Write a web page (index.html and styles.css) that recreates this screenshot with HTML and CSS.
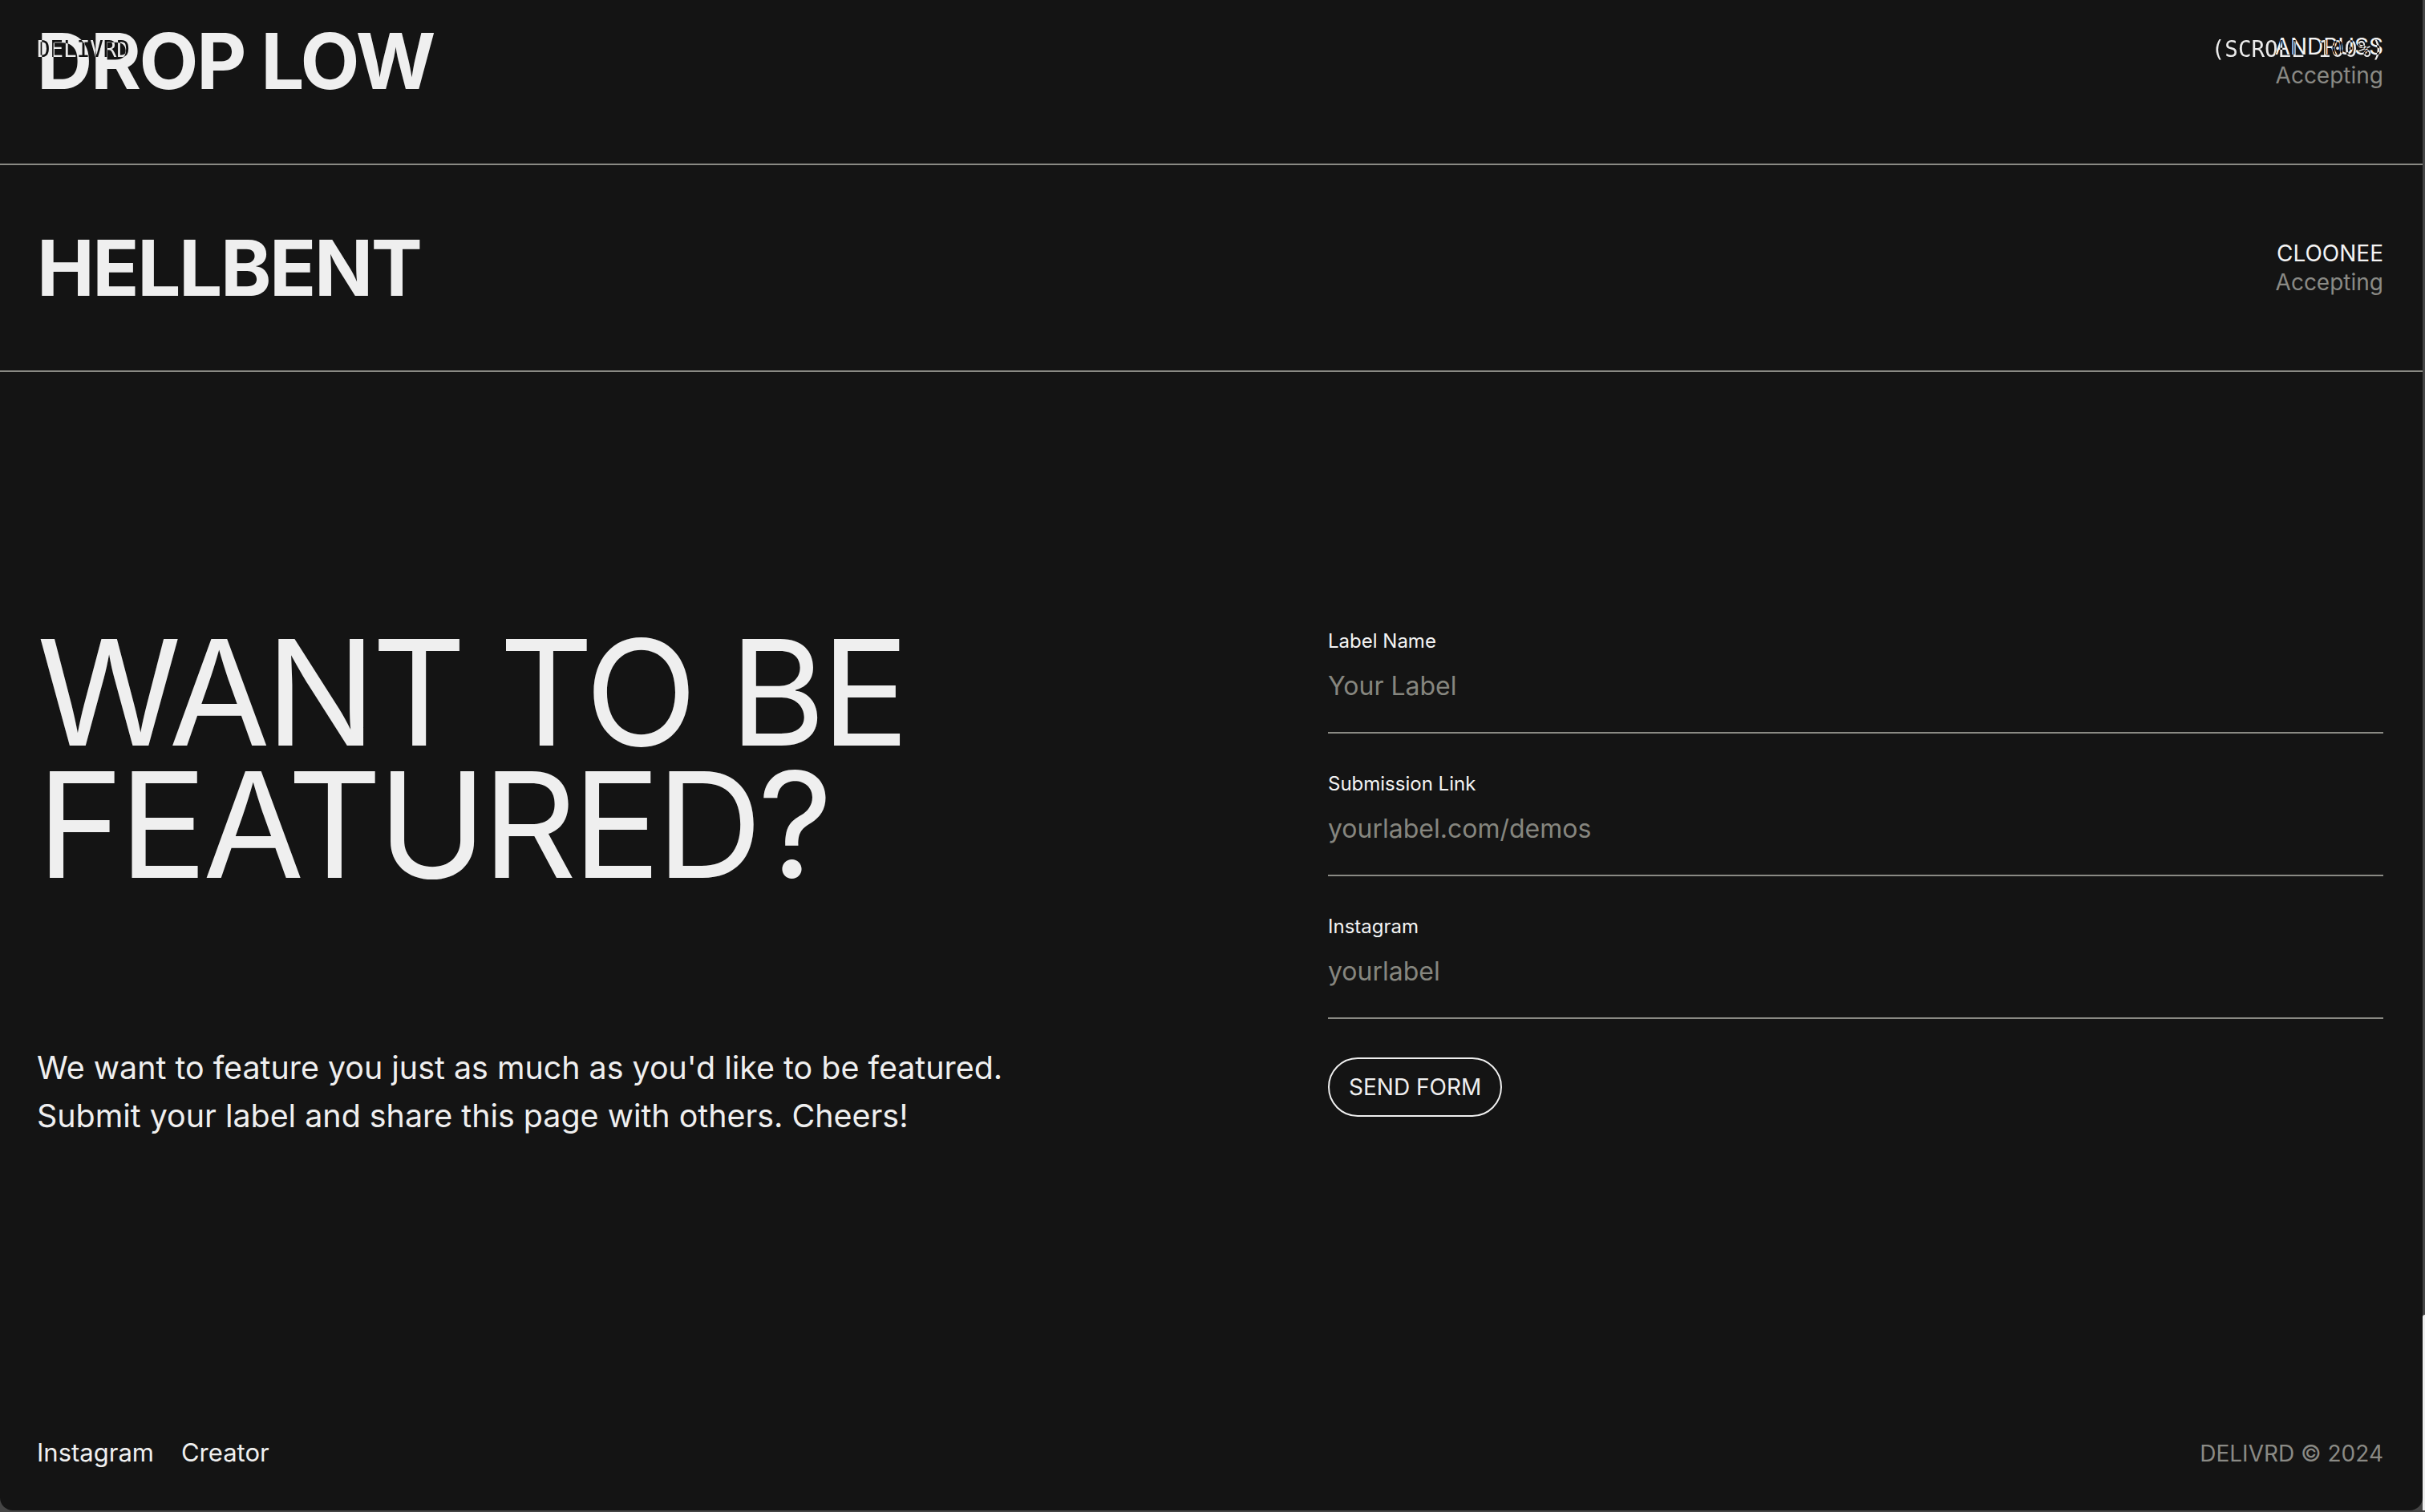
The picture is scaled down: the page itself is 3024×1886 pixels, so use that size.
FILE: index.html
```html
<!DOCTYPE html>
<html lang="en">
<head>
<meta charset="utf-8">
<title>DELIVRD</title>
<link rel="stylesheet" href="styles.css">
</head>
<body>
<header class="topbar">
  <span class="brand">DELIVRD</span>
  <span class="scroll">(SCROLL 100%)</span>
</header>

<main class="page">
  <ul class="labels">
    <li class="label-row">
      <h2 class="label-name">DROP LOW</h2>
      <div class="label-meta">
        <span class="owner">ANDRUSS</span>
        <span class="status">Accepting</span>
      </div>
    </li>
    <li class="label-row">
      <h2 class="label-name">HELLBENT</h2>
      <div class="label-meta">
        <span class="owner">CLOONEE</span>
        <span class="status">Accepting</span>
      </div>
    </li>
  </ul>

  <section class="feature">
    <div class="feature-copy">
      <h1 class="feature-title">WANT TO BE<br>FEATURED?</h1>
      <p class="feature-text">We want to feature you just as much as you'd like to be featured.<br>Submit your label and share this page with others. Cheers!</p>
    </div>
    <form class="feature-form">
      <label class="field">
        <span class="field-label">Label Name</span>
        <input class="field-input" type="text" placeholder="Your Label">
      </label>
      <label class="field">
        <span class="field-label">Submission Link</span>
        <input class="field-input" type="text" placeholder="yourlabel.com/demos">
      </label>
      <label class="field">
        <span class="field-label">Instagram</span>
        <input class="field-input" type="text" placeholder="yourlabel">
      </label>
      <button class="send" type="button">SEND FORM</button>
    </form>
  </section>

  <footer class="footer">
    <nav class="footer-links">
      <a href="#">Instagram</a>
      <a href="#">Creator</a>
    </nav>
    <span class="copyright">DELIVRD © 2024</span>
  </footer>
</main>
<div class="scroll-thumb"></div>
</body>
</html>
```

FILE: styles.css
```css
* { box-sizing: border-box; }

html, body {
  margin: 0;
  padding: 0;
}

body {
  background: #454545;
  font-family: Inter, "Noto Sans", "Liberation Sans", sans-serif;
  color: #efefef;
  overflow: hidden;
  height: 1886px;
}

.topbar {
  position: fixed;
  top: 0;
  left: 0;
  right: 0;
  height: 122px;
  padding: 0 51px 0 46px;
  display: flex;
  justify-content: space-between;
  align-items: center;
  font-family: "DejaVu Sans Mono", "Liberation Mono", monospace;
  font-size: 27.5px;
  color: #ffffff;
  mix-blend-mode: difference;
  z-index: 10;
  pointer-events: none;
}

.page {
  width: calc(100% - 3px);
  min-height: 1936px;
  margin-top: -52px;
  background: #141414;
  border-radius: 0 0 16px 16px;
  display: flex;
  flex-direction: column;
}

.labels {
  list-style: none;
  margin: 0;
  padding: 0;
}

.label-row {
  display: flex;
  justify-content: space-between;
  align-items: center;
  padding: 80px 49px 80px 46px;
  border-bottom: 2px solid #8a8a84;
}

.label-name {
  margin: 0;
  font-size: 96px;
  font-weight: 700;
  line-height: 1;
  letter-spacing: -0.025em;
  color: #efefef;
}

.label-meta {
  display: flex;
  flex-direction: column;
  align-items: flex-end;
  font-size: 28px;
  line-height: 36px;
}

.owner { color: #f4f4f4; }
.status { color: #8a8a85; }

.feature {
  flex: 1;
  display: grid;
  grid-template-columns: 1fr 1fr;
  column-gap: 294px;
  padding: 318px 49px 0 46px;
}

.feature-title {
  margin: 0;
  font-size: 183px;
  font-weight: 400;
  line-height: 0.9;
  letter-spacing: -0.03em;
  color: #efefef;
}

.feature-text {
  margin: 191px 0 0;
  font-size: 39.4px;
  line-height: 60px;
  color: #efefef;
}

.feature-form {
  display: flex;
  flex-direction: column;
  align-items: flex-start;
}

.field {
  display: flex;
  flex-direction: column;
  width: 100%;
  margin-bottom: 45px;
}

.field:last-of-type { margin-bottom: 48px; }

.field-label {
  font-size: 24px;
  line-height: 36px;
  color: #f4f4f4;
}

.field-input {
  margin-top: 18px;
  padding: 0 0 38px;
  border: 0;
  border-bottom: 2px solid #8a8a84;
  background: transparent;
  font-family: inherit;
  font-size: 32px;
  line-height: 39px;
  height: 79px;
  color: #efefef;
  outline: none;
}

.field-input::placeholder { color: #86867f; }

.send {
  padding: 17px 24px;
  border: 2px solid #efefef;
  border-radius: 999px;
  background: transparent;
  font-family: inherit;
  font-size: 28px;
  line-height: 36px;
  color: #efefef;
}

.footer {
  display: flex;
  justify-content: space-between;
  align-items: baseline;
  padding: 0 49px 48px 46px;
  font-size: 31px;
  line-height: 45px;
}

.footer-links {
  display: flex;
  gap: 34px;
}

.footer-links a {
  color: #efefef;
  text-decoration: none;
}

.copyright {
  font-size: 28px;
  color: #8a8a85;
}

.scroll-thumb {
  position: fixed;
  right: 0;
  top: 1640px;
  width: 3px;
  height: 244px;
  background: #eeeeee;
  border-radius: 6px 0 0 0;
}
```
